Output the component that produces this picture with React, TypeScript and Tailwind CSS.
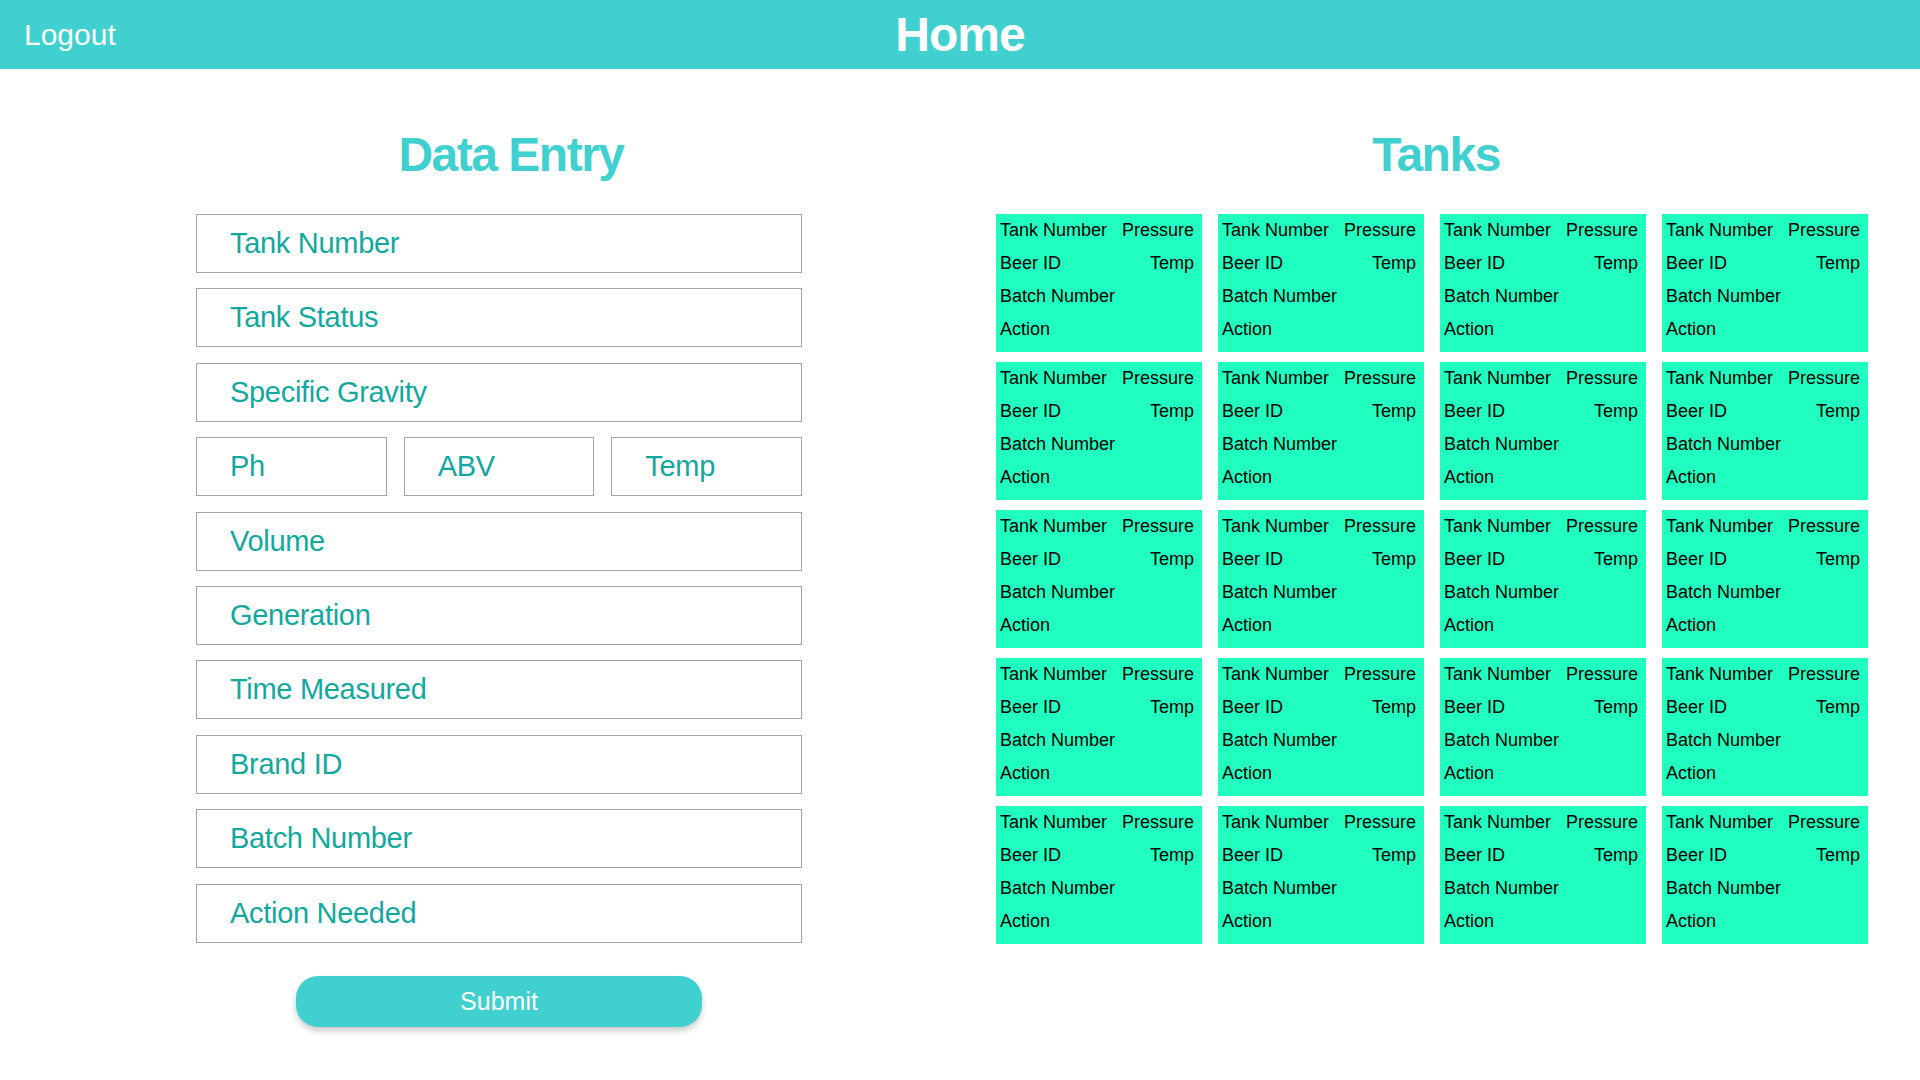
const fields = [
  "Tank Number",
  "Tank Status",
  "Specific Gravity",
  ["Ph", "ABV", "Temp"],
  "Volume",
  "Generation",
  "Time Measured",
  "Brand ID",
  "Batch Number",
  "Action Needed",
];

const tanks = Array.from({ length: 20 }, (_, i) => i);

function Field({ label }: { label: string }) {
  return (
    <input
      placeholder={label}
      className="h-[59px] w-full min-w-0 border border-[#a3a3a3] bg-white px-[33px] text-[29px] tracking-[-0.3px] text-[#13a89e] outline-none placeholder:text-[#13a89e]"
    />
  );
}

function TankCard() {
  return (
    <div className="h-[138px] bg-[#20ffbf] pl-1 pr-2 text-[18px] leading-[33px] text-black">
      <div className="flex justify-between">
        <span>Tank Number</span>
        <span>Pressure</span>
      </div>
      <div className="flex justify-between">
        <span>Beer ID</span>
        <span>Temp</span>
      </div>
      <div>Batch Number</div>
      <div>Action</div>
    </div>
  );
}

export default function App() {
  return (
    <div className="min-h-screen w-full bg-white font-['Liberation_Sans',Arial,sans-serif]">
      <header className="grid h-[69px] grid-cols-[1fr_auto_1fr] items-center bg-[#40d0d0] px-6 text-white">
        <button className="justify-self-start text-[30px] leading-none">Logout</button>
        <h1 className="text-[48px] font-bold leading-none tracking-[-1px]">Home</h1>
        <div />
      </header>

      <main className="flex gap-[194px] pl-[196px]">
        <section className="w-[606px]">
          <h2 className="mt-[62px] pl-6 text-center text-[48px] font-bold leading-none tracking-[-1.5px] text-[#40d0d0]">
            Data Entry
          </h2>
          <form className="mt-[35px] flex flex-col gap-[15.4px]">
            {fields.map((f) =>
              Array.isArray(f) ? (
                <div key={f.join()} className="grid grid-cols-3 gap-[17px]">
                  {f.map((l) => (
                    <Field key={l} label={l} />
                  ))}
                </div>
              ) : (
                <Field key={f} label={f} />
              )
            )}
            <button
              type="button"
              className="mx-auto mt-[18px] h-[51px] w-[406px] rounded-[22px] bg-[#40d0d0] text-[25px] text-white shadow-[0_4px_6px_rgba(0,0,0,0.2)]"
            >
              Submit
            </button>
          </form>
        </section>

        <section>
          <h2 className="mt-[62px] pl-2 text-center text-[48px] font-bold leading-none tracking-[-1.5px] text-[#40d0d0]">
            Tanks
          </h2>
          <div className="mt-[35px] grid grid-cols-[repeat(4,206px)] gap-x-4 gap-y-[10px]">
            {tanks.map((t) => (
              <TankCard key={t} />
            ))}
          </div>
        </section>
      </main>
    </div>
  );
}
